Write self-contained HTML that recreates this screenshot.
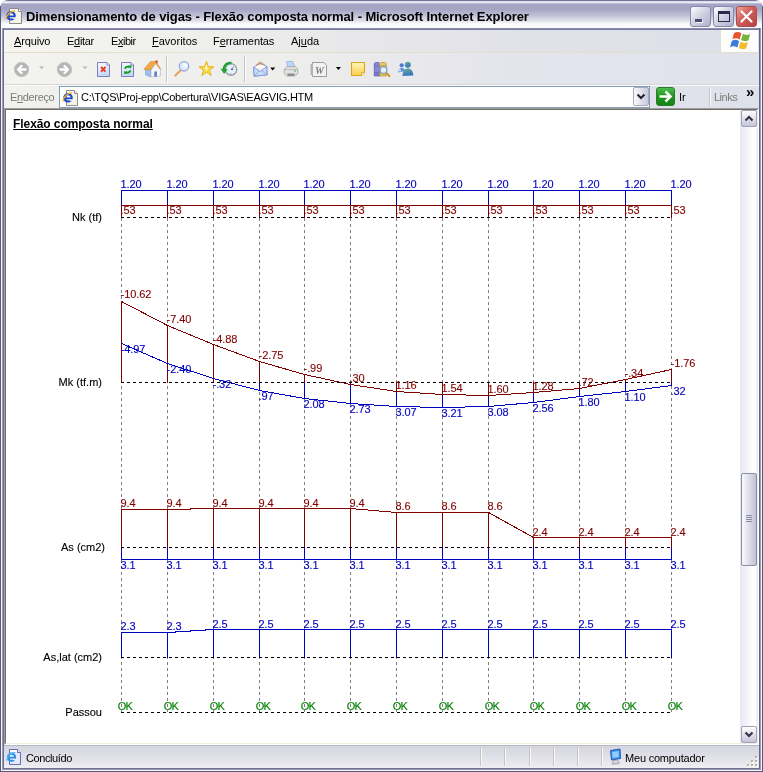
<!DOCTYPE html>
<html><head><meta charset="utf-8"><title>Dimensionamento de vigas - Flexão composta normal</title>
<style>
html,body{margin:0;padding:0}
body{width:763px;height:772px;overflow:hidden;position:relative;background:#fff;font-family:"Liberation Sans",sans-serif;font-size:11px;color:#000}
div,span{position:absolute;box-sizing:border-box;white-space:nowrap}
svg{position:absolute;overflow:visible}
#frame{will-change:transform;left:0;top:0;width:763px;height:772px;background:#c9c9d9;border-radius:8px 8px 0 0;overflow:hidden}
#title{left:0;top:0;width:763px;height:30px;border-radius:8px 8px 0 0;
 background:linear-gradient(#6e6e92 0,#7a7a9c 1px,#dcdcec 1.5px,#ececf6 2.5px,#a6a6c6 4px,#a4a4c4 9px,#bebed4 15px,#e2e2ec 21px,#fcfcfe 24px,#fafafc 27.8px,#9090ae 28.3px,#787a9e 29.5px,#787a9e 30px)}
#ttext{left:26px;top:9px;font-weight:bold;font-size:13px;line-height:16px;color:#000;letter-spacing:-0.1px}
.mb{top:30px;left:4px;width:755px;height:22px;background:linear-gradient(90deg,#f5f4ef 0,#efefed 25%,#e8e8ea 45%,#e1e2e9 70%,#dddfe8 100%)}
.mi{top:34px;font-size:11px;line-height:14px}
.mi u{text-decoration:underline}
#tb{top:53px;left:4px;width:755px;height:32px;background:linear-gradient(90deg,#f3f3ef 0,#ededec 40%,#e3e4ec 70%,#e1e3ec 100%)}
#ab{top:86px;left:4px;width:755px;height:22px;background:linear-gradient(90deg,#f1f1ee 0,#ebebec 40%,#e1e2ea 70%,#dfe1ea 100%)}
#content{left:4px;top:108px;width:755px;height:637px;background:#fff;border:1px solid;border-color:#9d9da1 #fff #fff #9d9da1}
#content2{left:5px;top:109px;width:753px;height:635px;background:#fff;border:1px solid;border-color:#716f64 #f1efe2 #f1efe2 #716f64}
#chart text{font-family:"Liberation Sans",sans-serif;font-size:11px;stroke-width:0.12px}
#sb{left:4px;top:745px;width:755px;height:23px;background:linear-gradient(#b8b8c4 0,#b8b8c4 1px,#d6d6e0 1px,#dfdfe7 11px,#ebebf0 21px,#f0f0f4 23px)}
</style></head>
<body>
<div id="frame">
 <div id="title"></div>
 <!-- frame borders -->
 <div style="left:0;top:6px;width:1px;height:766px;background:#58587a"></div>
 <div style="left:1px;top:28px;width:1px;height:744px;background:#f6f6fa"></div>
 <div style="left:2px;top:28px;width:1px;height:744px;background:#9a9ab6"></div>
 <div style="left:3px;top:28px;width:1px;height:744px;background:#6e6e8e"></div>
 <div style="left:759px;top:28px;width:1px;height:744px;background:#66668a"></div>
 <div style="left:760px;top:28px;width:1px;height:744px;background:#9a9ab6"></div>
 <div style="left:761px;top:28px;width:1px;height:744px;background:#f6f6fa"></div>
 <div style="left:762px;top:6px;width:1px;height:766px;background:#58587a"></div>
 <div style="left:3px;top:768px;width:757px;height:1px;background:#6e6e8e"></div>
 <div style="left:2px;top:769px;width:759px;height:1px;background:#9a9ab6"></div>
 <div style="left:1px;top:770px;width:761px;height:1px;background:#f6f6fa"></div>
 <div style="left:0;top:771px;width:763px;height:1px;background:#58587a"></div>

 <!-- title icon + text -->
 <svg style="left:5px;top:8px" width="17" height="16" viewBox="0 0 17 16">
  <path d="M4.500 .500h9l3 3v12h-12z" fill="#f4f4ea" stroke="#8c8c84"/>
  <path d="M13.500 .500v3h3" fill="#fff" stroke="#8c8c84"/>
  <circle cx="6" cy="7.800" r="3.700" fill="none" stroke="#1a48d0" stroke-width="2.200"/>
  <path d="M2.500 8.300h7" stroke="#1a48d0" stroke-width="1.800"/>
  <rect x="7.500" y="9.300" width="3.500" height="1.600" fill="#f4f4ea"/>
  <path d="M1 11.500C1.500 6 6 2.500 10 3.200" stroke="#f0b020" stroke-width="1.200" fill="none"/>
 </svg>
 <div id="ttext">Dimensionamento de vigas - Flexão composta normal - Microsoft Internet Explorer</div>

 <!-- caption buttons -->
 <div style="left:690px;top:6px;width:21px;height:21px;border-radius:3px;border:1px solid #8888ac;background:linear-gradient(135deg,#ffffff 0,#d4d4e4 45%,#b0b0cc 100%)"></div>
 <div style="left:695px;top:19px;width:7px;height:3px;background:#4c4c78;box-shadow:1px 1px #f4f4fa"></div>
 <div style="left:713px;top:6px;width:21px;height:21px;border-radius:3px;border:1px solid #8888ac;background:linear-gradient(135deg,#ffffff 0,#d4d4e4 45%,#b0b0cc 100%)"></div>
 <div style="left:718px;top:11px;width:12px;height:11px;border:1px solid #2a2a4a;border-top-width:3px"></div>
 <div style="left:736px;top:6px;width:21px;height:21px;border-radius:3px;border:1px solid #a85050;background:linear-gradient(135deg,#eaa49c 0,#d25e5a 45%,#b44040 100%)"></div>
 <svg style="left:736px;top:6px" width="21" height="21"><path d="M5.5 5.5l10 10M15.5 5.5l-10 10" stroke="#fff" stroke-width="2.2" stroke-linecap="round"/></svg>

 <!-- menu bar -->
 <div class="mb"></div>
 <div style="left:4px;top:52px;width:755px;height:1px;background:#e3dfcc"></div>
 <div style="left:720px;top:30px;width:38px;height:22px;background:#fdfdfd;border-left:1px solid #e3dfcc"></div>
 <svg style="left:729.500px;top:31px" width="21.500" height="19" viewBox="0 2 17 15">
  <path d="M3.2 3.5c2-1.2 4-1 5.8.2l-1.4 5c-1.8-1.2-3.8-1.4-5.8-.2z" fill="#e8552c"/>
  <path d="M10.2 4.2c1.8 1.1 3.8 1.3 5.8.2l-1.4 5c-2 1.1-4 .9-5.8-.2z" fill="#74b53a"/>
  <path d="M1.4 9.8c2-1.2 4-1 5.8.2l-1.4 5c-1.8-1.2-3.8-1.4-5.8-.2z" fill="#3c7ed8"/>
  <path d="M8.4 10.5c1.8 1.1 3.8 1.3 5.8.2l-1.4 5c-2 1.1-4 .9-5.8-.2z" fill="#f4bb2c"/>
 </svg>
 <span class="mi" style="left:14px;letter-spacing:-0.15px"><u>A</u>rquivo</span>
 <span class="mi" style="left:67px;letter-spacing:-0.3px">E<u>d</u>itar</span>
 <span class="mi" style="left:111px;letter-spacing:-0.45px">E<u>x</u>ibir</span>
 <span class="mi" style="left:152px"><u>F</u>avoritos</span>
 <span class="mi" style="left:213px;letter-spacing:-0.1px">F<u>e</u>rramentas</span>
 <span class="mi" style="left:291px">Aj<u>u</u>da</span>

 <!-- toolbar -->
 <div id="tb"></div>
 <div style="left:4px;top:85px;width:755px;height:1px;background:#fafaf8"></div>
 <div style="left:4px;top:84px;width:755px;height:1px;background:#d9d9dc"></div>
 <svg id="tbicons" style="left:0;top:53px" width="763" height="32" viewBox="0 53 763 32">
  <defs><linearGradient id="pg" x1="0" y1="0" x2="0.300" y2="1"><stop offset="0" stop-color="#fdfdff"/><stop offset="1" stop-color="#c4d8f6"/></linearGradient><linearGradient id="ng" x1="0" y1="0" x2="0" y2="1"><stop offset="0" stop-color="#fff6b8"/><stop offset="1" stop-color="#fbce4c"/></linearGradient><linearGradient id="mg" x1="0" y1="0" x2="0.400" y2="1"><stop offset="0" stop-color="#62b48c"/><stop offset="1" stop-color="#3c74c4"/></linearGradient></defs>
  <!-- back -->
  <circle cx="21.500" cy="69.500" r="7.200" fill="#b6b6b6" stroke="#c6c6c6"/>
  <path d="M25.500 69.500h-7M21.500 66l-3.500 3.500 3.500 3.500" stroke="#fff" stroke-width="2.300" fill="none" stroke-linecap="round" stroke-linejoin="round"/>
  <path d="M39 66.5h5l-2.5 2.5z" fill="#b4b4b4"/>
  <!-- forward -->
  <circle cx="64.500" cy="69.500" r="7.200" fill="#b6b6b6" stroke="#c6c6c6"/>
  <path d="M60.500 69.500h7M64.500 66l3.500 3.500-3.500 3.500" stroke="#fff" stroke-width="2.300" fill="none" stroke-linecap="round" stroke-linejoin="round"/>
  <path d="M82.5 66.5h5l-2.5 2.5z" fill="#b4b4b4"/>
  <!-- stop -->
  <path d="M97.500 62.500h9.500l2.500 2.500v11.500h-12z" fill="url(#pg)" stroke="#7272b8" stroke-width=".9"/>
  <path d="M107 62.500v2.500h2.500" fill="#fff" stroke="#6c6cb4" stroke-width=".8"/>
  <path d="M101 67l4.500 4.600M105.500 67l-4.500 4.600" stroke="#f03818" stroke-width="1.900"/>
  <!-- refresh -->
  <path d="M121.500 62.500h9.500l2.500 2.500v11.500h-12z" fill="url(#pg)" stroke="#7272b8" stroke-width=".9"/>
  <path d="M131 62.500v2.500h2.500" fill="#fff" stroke="#6c6cb4" stroke-width=".8"/>
  <path d="M125 68.800a2.800 2.600 0 0 1 4.800-1.300M130.400 70.400a2.800 2.600 0 0 1-4.800 1.400" stroke="#12a024" stroke-width="1.900" fill="none"/>
  <path d="M128.300 65.300l3.400 .2-.8 3.300zM127.200 74l-3.400-.2 .8-3.300z" fill="#12a024"/>
  <!-- home -->
  <rect x="155.500" y="60.500" width="2" height="3.500" fill="#c02818"/>
  <path d="M145.500 69l5.500 1v7l-5.500-2z" fill="#9cc0ec" stroke="#7aa0d4" stroke-width=".6"/>
  <path d="M151 70l5-6.500 4.500 6v6.500l-9.500 1z" fill="#f2f5fb" stroke="#a8b4cc" stroke-width=".6"/>
  <path d="M143.800 69.300l6.700-7.800h5.500l-5.300 8.500z" fill="#f2a848" stroke="#d48c30" stroke-width=".6"/>
  <path d="M156 61.500l5 7.300-1 .7-4.500-6z" fill="#e8983c"/>
  <path d="M154.300 71.500h2.700v5l-2.700 .3z" fill="#6c7cc0"/>
  <!-- sep -->
  <path d="M166.500 56v26" stroke="#c2c2c6"/><path d="M167.500 56v26" stroke="#fbfbfb"/>
  <!-- search -->
  <path d="M175.300 75.500l4.900-4.800" stroke="#e8a25c" stroke-width="2.100" stroke-linecap="round"/>
  <circle cx="184" cy="66.300" r="4.700" fill="#dcecfc" stroke="#9aa6e0" stroke-width="1.300"/>
  <circle cx="185" cy="65.300" r="2.200" fill="#f6fbff"/>
  <!-- favorites star -->
  <path d="M206.50 61.30L208.32 66.69L214.01 66.76L209.45 70.16L211.14 75.59L206.50 72.30L201.86 75.59L203.55 70.16L198.99 66.76L204.68 66.69z" fill="#fbdc48" stroke="#e2ae18" stroke-width=".9" stroke-linejoin="round"/>
  <path d="M206.500 64.500l1.300 3.500-1.300 3-1.600-3z" fill="#fff8c8"/>
  <!-- history -->
  <circle cx="231" cy="69.500" r="5.700" fill="#e4f2fb" stroke="#9ca2aa" stroke-width="1.400"/>
  <path d="M231 69.500l2.800-2.600M231 69.500h2.200" stroke="#5a6470" stroke-width="1"/>
  <circle cx="231" cy="74" r=".6" fill="#e05030"/>
  <path d="M231.500 63C226.500 62.300 223.600 65.500 224 70" stroke="#22a032" stroke-width="2.500" fill="none"/>
  <path d="M224.200 74l-3.600-5.200 7 .3z" fill="#22a032"/>
  <!-- sep -->
  <path d="M244.500 56v26" stroke="#c2c2c6"/><path d="M245.500 56v26" stroke="#fbfbfb"/>
  <!-- mail -->
  <path d="M256 65l4-3.300 4.500 2.800z" fill="#f6b060" stroke="#d89040" stroke-width=".5"/>
  <path d="M255.500 66.500l5-2 4.500 1.500v2h-9.500z" fill="#fffdf4"/>
  <path d="M253.700 67.300l6.500-4.300 6.600 3.400 .2 8.400-12.800 1.400z" fill="none" stroke="#8a8cd8" stroke-width=".9"/>
  <path d="M253.700 67.300l6.600 4.200 6.500-5.100 .2 8.400-12.800 1.400z" fill="#bfe2fa" stroke="#8a8cd8" stroke-width=".9"/>
  <path d="M254.200 76l5-5M267 74.800l-5.200-4.300" stroke="#8a8cd8" fill="none" stroke-width=".7"/>
  <path d="M270.200 67.500h5l-2.500 3z" fill="#000"/>
  <!-- print -->
  <path d="M287.500 67l-.8-5.300 6-.4 2 5.700z" fill="#bcd8fa" stroke="#86a8e0" stroke-width=".7"/>
  <path d="M284.300 69l3.200-2.300h7.800l2.500 2.300v4.500l-3 2.500h-8l-2.500-2.500z" fill="#e2e2e2" stroke="#a2a2a2" stroke-width=".8"/>
  <path d="M284.300 69.500h13.500" stroke="#b4b4b4" stroke-width=".8"/>
  <path d="M287 73.500h8l-1 2.500h-6z" fill="#8c8c8c"/>
  <rect x="294" y="70.500" width="2" height="1" fill="#48b048"/>
  <!-- word edit -->
  <path d="M312.500 62.500h11l3 2.500v11.500h-14z" fill="#f2f2f2" stroke="#9c9c9c"/>
  <path d="M310.500 64h2.500v11h-2.500z" fill="#b4b4b4"/>
  <text x="315" y="74" font-family="Liberation Serif,serif" font-style="italic" font-weight="bold" font-size="10" fill="#7a7a7a">W</text>
  <path d="M335.900 67h5l-2.500 3z" fill="#000"/>
  <!-- note -->
  <path d="M351.500 62.500h13v10l-3 3h-10z" fill="url(#ng)" stroke="#d8a818" stroke-width="1.100"/>
  <path d="M364.500 72.500h-3v3" fill="#fffbe0" stroke="#d8a818" stroke-width=".8"/>
  <!-- research -->
  <path d="M374.300 63.500l1-1h3.500l1 1v12.500h-5.500z" fill="#8686dc" stroke="#5454aa" stroke-width=".7"/>
  <path d="M374.300 66h5.500M374.300 72.500h5.500M374.300 74h5.500" stroke="#5c5cb4" stroke-width=".6"/>
  <path d="M379.800 63.500l1-1h4.500l1 1v12.500h-6.500z" fill="#ecc868" stroke="#b89030" stroke-width=".7"/>
  <path d="M379.800 65.500h6.500M379.800 74h6.500" stroke="#c8a040" stroke-width=".6"/>
  <path d="M386 72.500l3.300 3.600" stroke="#d89830" stroke-width="2.200" stroke-linecap="round"/>
  <circle cx="383.500" cy="70" r="3.400" fill="#dff2fc" stroke="#7a9ab8" stroke-width="1.100"/>
  <!-- messenger -->
  <circle cx="401.700" cy="65.300" r="2.100" fill="#4c7cd4"/>
  <path d="M398.300 72.500c0-3 1.500-4.500 3.500-4.500s3 1.200 3 3z" fill="#5a8ce0"/>
  <circle cx="400" cy="70.500" r="1" fill="#f4f8ff"/>
  <circle cx="407.800" cy="64.800" r="3" fill="url(#mg)"/>
  <path d="M402.500 76c0-5 2.300-7.500 5.300-7.500s5.500 2.500 5.500 7z" fill="url(#mg)"/>
 </svg>

 <!-- address bar -->
 <div id="ab"></div>
 <span style="left:10px;top:90px;font-size:11px;line-height:14px;color:#7c7c74;letter-spacing:-0.35px">E<u>n</u>dereço</span>
 <div style="left:59px;top:86px;width:591px;height:22px;background:#fff;border:1px solid #7f9db9"></div>
 <svg style="left:62px;top:90px" width="17" height="16" viewBox="0 0 17 16">
  <path d="M4.500 .500h8l3 3v12h-11z" fill="#f4f4ea" stroke="#8c8c84"/>
  <path d="M12.500 .500v3h3" fill="#fff" stroke="#8c8c84"/>
  <circle cx="6" cy="7.800" r="3.700" fill="none" stroke="#1a48d0" stroke-width="2.200"/>
  <path d="M2.500 8.300h7" stroke="#1a48d0" stroke-width="1.800"/>
  <rect x="7.500" y="9.300" width="3.500" height="1.600" fill="#f4f4ea"/>
  <path d="M1 11.500C1.500 6 6 2.500 10 3.200" stroke="#f0b020" stroke-width="1.200" fill="none"/>
 </svg>
 <span id="addr" style="left:81px;top:90px;font-size:11px;line-height:14px;letter-spacing:-0.24px">C:\TQS\Proj-epp\Cobertura\VIGAS\EAGVIG.HTM</span>
 <div style="left:633px;top:87px;width:16px;height:19px;border:1px solid #a8a8c0;border-radius:2px;background:linear-gradient(90deg,#fafafc,#c8c8dc)"></div>
 <svg style="left:633px;top:87px" width="16" height="19"><path d="M4.500 7.500l3.500 3.500 3.500-3.500" stroke="#202030" stroke-width="2" fill="none"/></svg>
 <div style="left:656px;top:87px;width:19px;height:19px;border-radius:3px;border:1px solid #2a7a2a;background:linear-gradient(#4cbc4c,#1c961c 50%,#148414)"></div>
 <svg style="left:656px;top:87px" width="19" height="19"><path d="M3.500 9.500h10.500M9.500 4.500l5 5-5 5" stroke="#fff" stroke-width="2.500" fill="none"/></svg>
 <span style="left:679px;top:90px;font-size:11px;line-height:14px">Ir</span>
 <div style="left:709px;top:88px;width:1px;height:18px;background:#c4c4cc"></div>
 <div style="left:710px;top:88px;width:1px;height:18px;background:#fbfbfb"></div>
 <span style="left:714px;top:90px;font-size:11px;line-height:14px;color:#7c7c74;letter-spacing:-0.5px">Links</span>
 <span style="left:746px;top:85px;font-size:15px;line-height:14px;font-weight:bold">»</span>

 <!-- content -->
 <div id="content"></div><div id="content2"></div>
 <span id="h" style="left:13px;top:117px;font-size:12px;line-height:15px;letter-spacing:-0.07px;font-weight:bold;text-decoration:underline">Flexão composta normal</span>
 <svg id="chart" style="left:0;top:0" width="763" height="772" viewBox="0 0 763 772">
<line x1="121.5" y1="218" x2="121.5" y2="712" stroke="#808080" stroke-dasharray="3 3" shape-rendering="crispEdges"/>
<line x1="167.5" y1="218" x2="167.5" y2="712" stroke="#808080" stroke-dasharray="3 3" shape-rendering="crispEdges"/>
<line x1="213.5" y1="218" x2="213.5" y2="712" stroke="#808080" stroke-dasharray="3 3" shape-rendering="crispEdges"/>
<line x1="259.5" y1="218" x2="259.5" y2="712" stroke="#808080" stroke-dasharray="3 3" shape-rendering="crispEdges"/>
<line x1="304.5" y1="218" x2="304.5" y2="712" stroke="#808080" stroke-dasharray="3 3" shape-rendering="crispEdges"/>
<line x1="350.5" y1="218" x2="350.5" y2="712" stroke="#808080" stroke-dasharray="3 3" shape-rendering="crispEdges"/>
<line x1="396.5" y1="218" x2="396.5" y2="712" stroke="#808080" stroke-dasharray="3 3" shape-rendering="crispEdges"/>
<line x1="442.5" y1="218" x2="442.5" y2="712" stroke="#808080" stroke-dasharray="3 3" shape-rendering="crispEdges"/>
<line x1="488.5" y1="218" x2="488.5" y2="712" stroke="#808080" stroke-dasharray="3 3" shape-rendering="crispEdges"/>
<line x1="533.5" y1="218" x2="533.5" y2="712" stroke="#808080" stroke-dasharray="3 3" shape-rendering="crispEdges"/>
<line x1="579.5" y1="218" x2="579.5" y2="712" stroke="#808080" stroke-dasharray="3 3" shape-rendering="crispEdges"/>
<line x1="625.5" y1="218" x2="625.5" y2="712" stroke="#808080" stroke-dasharray="3 3" shape-rendering="crispEdges"/>
<line x1="671.5" y1="218" x2="671.5" y2="712" stroke="#808080" stroke-dasharray="3 3" shape-rendering="crispEdges"/>
<text x="120.6" y="188" fill="#0000c0" stroke="#0000c0" letter-spacing="-0.1">1.20</text>
<line x1="121.5" y1="190" x2="121.5" y2="206" stroke="#0000c0" shape-rendering="crispEdges"/>
<line x1="121.5" y1="205" x2="121.5" y2="218" stroke="#800000" shape-rendering="crispEdges"/>
<text x="120.6" y="214" fill="#800000" stroke="#800000" letter-spacing="-0.1">.53</text>
<text x="166.6" y="188" fill="#0000c0" stroke="#0000c0" letter-spacing="-0.1">1.20</text>
<line x1="167.5" y1="190" x2="167.5" y2="206" stroke="#0000c0" shape-rendering="crispEdges"/>
<line x1="167.5" y1="205" x2="167.5" y2="218" stroke="#800000" shape-rendering="crispEdges"/>
<text x="166.6" y="214" fill="#800000" stroke="#800000" letter-spacing="-0.1">.53</text>
<text x="212.6" y="188" fill="#0000c0" stroke="#0000c0" letter-spacing="-0.1">1.20</text>
<line x1="213.5" y1="190" x2="213.5" y2="206" stroke="#0000c0" shape-rendering="crispEdges"/>
<line x1="213.5" y1="205" x2="213.5" y2="218" stroke="#800000" shape-rendering="crispEdges"/>
<text x="212.6" y="214" fill="#800000" stroke="#800000" letter-spacing="-0.1">.53</text>
<text x="258.6" y="188" fill="#0000c0" stroke="#0000c0" letter-spacing="-0.1">1.20</text>
<line x1="259.5" y1="190" x2="259.5" y2="206" stroke="#0000c0" shape-rendering="crispEdges"/>
<line x1="259.5" y1="205" x2="259.5" y2="218" stroke="#800000" shape-rendering="crispEdges"/>
<text x="258.6" y="214" fill="#800000" stroke="#800000" letter-spacing="-0.1">.53</text>
<text x="303.6" y="188" fill="#0000c0" stroke="#0000c0" letter-spacing="-0.1">1.20</text>
<line x1="304.5" y1="190" x2="304.5" y2="206" stroke="#0000c0" shape-rendering="crispEdges"/>
<line x1="304.5" y1="205" x2="304.5" y2="218" stroke="#800000" shape-rendering="crispEdges"/>
<text x="303.6" y="214" fill="#800000" stroke="#800000" letter-spacing="-0.1">.53</text>
<text x="349.6" y="188" fill="#0000c0" stroke="#0000c0" letter-spacing="-0.1">1.20</text>
<line x1="350.5" y1="190" x2="350.5" y2="206" stroke="#0000c0" shape-rendering="crispEdges"/>
<line x1="350.5" y1="205" x2="350.5" y2="218" stroke="#800000" shape-rendering="crispEdges"/>
<text x="349.6" y="214" fill="#800000" stroke="#800000" letter-spacing="-0.1">.53</text>
<text x="395.6" y="188" fill="#0000c0" stroke="#0000c0" letter-spacing="-0.1">1.20</text>
<line x1="396.5" y1="190" x2="396.5" y2="206" stroke="#0000c0" shape-rendering="crispEdges"/>
<line x1="396.5" y1="205" x2="396.5" y2="218" stroke="#800000" shape-rendering="crispEdges"/>
<text x="395.6" y="214" fill="#800000" stroke="#800000" letter-spacing="-0.1">.53</text>
<text x="441.6" y="188" fill="#0000c0" stroke="#0000c0" letter-spacing="-0.1">1.20</text>
<line x1="442.5" y1="190" x2="442.5" y2="206" stroke="#0000c0" shape-rendering="crispEdges"/>
<line x1="442.5" y1="205" x2="442.5" y2="218" stroke="#800000" shape-rendering="crispEdges"/>
<text x="441.6" y="214" fill="#800000" stroke="#800000" letter-spacing="-0.1">.53</text>
<text x="487.6" y="188" fill="#0000c0" stroke="#0000c0" letter-spacing="-0.1">1.20</text>
<line x1="488.5" y1="190" x2="488.5" y2="206" stroke="#0000c0" shape-rendering="crispEdges"/>
<line x1="488.5" y1="205" x2="488.5" y2="218" stroke="#800000" shape-rendering="crispEdges"/>
<text x="487.6" y="214" fill="#800000" stroke="#800000" letter-spacing="-0.1">.53</text>
<text x="532.6" y="188" fill="#0000c0" stroke="#0000c0" letter-spacing="-0.1">1.20</text>
<line x1="533.5" y1="190" x2="533.5" y2="206" stroke="#0000c0" shape-rendering="crispEdges"/>
<line x1="533.5" y1="205" x2="533.5" y2="218" stroke="#800000" shape-rendering="crispEdges"/>
<text x="532.6" y="214" fill="#800000" stroke="#800000" letter-spacing="-0.1">.53</text>
<text x="578.6" y="188" fill="#0000c0" stroke="#0000c0" letter-spacing="-0.1">1.20</text>
<line x1="579.5" y1="190" x2="579.5" y2="206" stroke="#0000c0" shape-rendering="crispEdges"/>
<line x1="579.5" y1="205" x2="579.5" y2="218" stroke="#800000" shape-rendering="crispEdges"/>
<text x="578.6" y="214" fill="#800000" stroke="#800000" letter-spacing="-0.1">.53</text>
<text x="624.6" y="188" fill="#0000c0" stroke="#0000c0" letter-spacing="-0.1">1.20</text>
<line x1="625.5" y1="190" x2="625.5" y2="206" stroke="#0000c0" shape-rendering="crispEdges"/>
<line x1="625.5" y1="205" x2="625.5" y2="218" stroke="#800000" shape-rendering="crispEdges"/>
<text x="624.6" y="214" fill="#800000" stroke="#800000" letter-spacing="-0.1">.53</text>
<text x="670.6" y="188" fill="#0000c0" stroke="#0000c0" letter-spacing="-0.1">1.20</text>
<line x1="671.5" y1="190" x2="671.5" y2="206" stroke="#0000c0" shape-rendering="crispEdges"/>
<line x1="671.5" y1="205" x2="671.5" y2="218" stroke="#800000" shape-rendering="crispEdges"/>
<text x="670.6" y="214" fill="#800000" stroke="#800000" letter-spacing="-0.1">.53</text>
<line x1="121" y1="190.5" x2="672" y2="190.5" stroke="#0000c0" shape-rendering="crispEdges"/>
<line x1="121" y1="205.5" x2="672" y2="205.5" stroke="#800000" shape-rendering="crispEdges"/>
<line x1="121" y1="217.5" x2="672" y2="217.5" stroke="#000" stroke-dasharray="3 3" shape-rendering="crispEdges"/>
<text x="102" y="221" fill="#000" stroke="#000" text-anchor="end">Nk (tf)</text>
<line x1="121.5" y1="343" x2="121.5" y2="383" stroke="#0000c0" shape-rendering="crispEdges"/>
<line x1="121.5" y1="301" x2="121.5" y2="383" stroke="#800000" shape-rendering="crispEdges"/>
<line x1="167.5" y1="363" x2="167.5" y2="383" stroke="#0000c0" shape-rendering="crispEdges"/>
<line x1="167.5" y1="325" x2="167.5" y2="383" stroke="#800000" shape-rendering="crispEdges"/>
<line x1="213.5" y1="378" x2="213.5" y2="383" stroke="#0000c0" shape-rendering="crispEdges"/>
<line x1="213.5" y1="344" x2="213.5" y2="383" stroke="#800000" shape-rendering="crispEdges"/>
<line x1="259.5" y1="382" x2="259.5" y2="391" stroke="#0000c0" shape-rendering="crispEdges"/>
<line x1="259.5" y1="361" x2="259.5" y2="383" stroke="#800000" shape-rendering="crispEdges"/>
<line x1="304.5" y1="382" x2="304.5" y2="399" stroke="#0000c0" shape-rendering="crispEdges"/>
<line x1="304.5" y1="374" x2="304.5" y2="383" stroke="#800000" shape-rendering="crispEdges"/>
<line x1="350.5" y1="382" x2="350.5" y2="404" stroke="#0000c0" shape-rendering="crispEdges"/>
<line x1="350.5" y1="382" x2="350.5" y2="385" stroke="#800000" shape-rendering="crispEdges"/>
<line x1="396.5" y1="382" x2="396.5" y2="407" stroke="#0000c0" shape-rendering="crispEdges"/>
<line x1="396.5" y1="382" x2="396.5" y2="392" stroke="#800000" shape-rendering="crispEdges"/>
<line x1="442.5" y1="382" x2="442.5" y2="408" stroke="#0000c0" shape-rendering="crispEdges"/>
<line x1="442.5" y1="382" x2="442.5" y2="395" stroke="#800000" shape-rendering="crispEdges"/>
<line x1="488.5" y1="382" x2="488.5" y2="407" stroke="#0000c0" shape-rendering="crispEdges"/>
<line x1="488.5" y1="382" x2="488.5" y2="396" stroke="#800000" shape-rendering="crispEdges"/>
<line x1="533.5" y1="382" x2="533.5" y2="403" stroke="#0000c0" shape-rendering="crispEdges"/>
<line x1="533.5" y1="382" x2="533.5" y2="393" stroke="#800000" shape-rendering="crispEdges"/>
<line x1="579.5" y1="382" x2="579.5" y2="397" stroke="#0000c0" shape-rendering="crispEdges"/>
<line x1="579.5" y1="382" x2="579.5" y2="389" stroke="#800000" shape-rendering="crispEdges"/>
<line x1="625.5" y1="382" x2="625.5" y2="392" stroke="#0000c0" shape-rendering="crispEdges"/>
<line x1="625.5" y1="379" x2="625.5" y2="383" stroke="#800000" shape-rendering="crispEdges"/>
<line x1="671.5" y1="382" x2="671.5" y2="386" stroke="#0000c0" shape-rendering="crispEdges"/>
<line x1="671.5" y1="369" x2="671.5" y2="383" stroke="#800000" shape-rendering="crispEdges"/>
<polyline points="121.5,343.5 167.5,363.5 213.5,378.5 259.5,390.5 304.5,398.5 350.5,403.5 396.5,406.5 442.5,407.5 488.5,406.5 533.5,402.5 579.5,396.5 625.5,391.5 671.5,385.5" fill="none" stroke="#0000c0" stroke-width="1" shape-rendering="crispEdges"/>
<polyline points="121.5,301.5 167.5,325.5 213.5,344.5 259.5,361.5 304.5,374.5 350.5,384.5 396.5,391.5 442.5,394.5 488.5,395.5 533.5,392.5 579.5,388.5 625.5,379.5 671.5,369.5" fill="none" stroke="#800000" stroke-width="1" shape-rendering="crispEdges"/>
<line x1="121" y1="382.5" x2="672" y2="382.5" stroke="#000" stroke-dasharray="3 3" shape-rendering="crispEdges"/>
<text x="120.6" y="298" fill="#800000" stroke="#800000" letter-spacing="-0.1">-10.62</text>
<text x="120.6" y="353" fill="#0000c0" stroke="#0000c0" letter-spacing="-0.1">-4.97</text>
<text x="166.6" y="323" fill="#800000" stroke="#800000" letter-spacing="-0.1">-7.40</text>
<text x="166.6" y="373" fill="#0000c0" stroke="#0000c0" letter-spacing="-0.1">-2.40</text>
<text x="212.6" y="343" fill="#800000" stroke="#800000" letter-spacing="-0.1">-4.88</text>
<text x="212.6" y="388" fill="#0000c0" stroke="#0000c0" letter-spacing="-0.1">-.32</text>
<text x="258.6" y="359" fill="#800000" stroke="#800000" letter-spacing="-0.1">-2.75</text>
<text x="258.6" y="400" fill="#0000c0" stroke="#0000c0" letter-spacing="-0.1">.97</text>
<text x="303.6" y="372" fill="#800000" stroke="#800000" letter-spacing="-0.1">-.99</text>
<text x="303.6" y="408" fill="#0000c0" stroke="#0000c0" letter-spacing="-0.1">2.08</text>
<text x="349.6" y="382" fill="#800000" stroke="#800000" letter-spacing="-0.1">.30</text>
<text x="349.6" y="413" fill="#0000c0" stroke="#0000c0" letter-spacing="-0.1">2.73</text>
<text x="395.6" y="389" fill="#800000" stroke="#800000" letter-spacing="-0.1">1.16</text>
<text x="395.6" y="416" fill="#0000c0" stroke="#0000c0" letter-spacing="-0.1">3.07</text>
<text x="441.6" y="392" fill="#800000" stroke="#800000" letter-spacing="-0.1">1.54</text>
<text x="441.6" y="417" fill="#0000c0" stroke="#0000c0" letter-spacing="-0.1">3.21</text>
<text x="487.6" y="393" fill="#800000" stroke="#800000" letter-spacing="-0.1">1.60</text>
<text x="487.6" y="416" fill="#0000c0" stroke="#0000c0" letter-spacing="-0.1">3.08</text>
<text x="532.6" y="390" fill="#800000" stroke="#800000" letter-spacing="-0.1">1.28</text>
<text x="532.6" y="412" fill="#0000c0" stroke="#0000c0" letter-spacing="-0.1">2.56</text>
<text x="578.6" y="386" fill="#800000" stroke="#800000" letter-spacing="-0.1">.72</text>
<text x="578.6" y="406" fill="#0000c0" stroke="#0000c0" letter-spacing="-0.1">1.80</text>
<text x="624.6" y="377" fill="#800000" stroke="#800000" letter-spacing="-0.1">-.34</text>
<text x="624.6" y="401" fill="#0000c0" stroke="#0000c0" letter-spacing="-0.1">1.10</text>
<text x="670.6" y="367" fill="#800000" stroke="#800000" letter-spacing="-0.1">-1.76</text>
<text x="670.6" y="395" fill="#0000c0" stroke="#0000c0" letter-spacing="-0.1">.32</text>
<text x="102" y="386" fill="#000" stroke="#000" text-anchor="end">Mk (tf.m)</text>
<line x1="121.5" y1="509" x2="121.5" y2="548" stroke="#800000" shape-rendering="crispEdges"/>
<line x1="121.5" y1="547" x2="121.5" y2="560" stroke="#0000c0" shape-rendering="crispEdges"/>
<text x="120.6" y="507" fill="#800000" stroke="#800000" letter-spacing="-0.1">9.4</text>
<text x="120.6" y="569" fill="#0000c0" stroke="#0000c0" letter-spacing="-0.1">3.1</text>
<line x1="167.5" y1="509" x2="167.5" y2="548" stroke="#800000" shape-rendering="crispEdges"/>
<line x1="167.5" y1="547" x2="167.5" y2="560" stroke="#0000c0" shape-rendering="crispEdges"/>
<text x="166.6" y="507" fill="#800000" stroke="#800000" letter-spacing="-0.1">9.4</text>
<text x="166.6" y="569" fill="#0000c0" stroke="#0000c0" letter-spacing="-0.1">3.1</text>
<line x1="213.5" y1="508" x2="213.5" y2="548" stroke="#800000" shape-rendering="crispEdges"/>
<line x1="213.5" y1="547" x2="213.5" y2="560" stroke="#0000c0" shape-rendering="crispEdges"/>
<text x="212.6" y="507" fill="#800000" stroke="#800000" letter-spacing="-0.1">9.4</text>
<text x="212.6" y="569" fill="#0000c0" stroke="#0000c0" letter-spacing="-0.1">3.1</text>
<line x1="259.5" y1="508" x2="259.5" y2="548" stroke="#800000" shape-rendering="crispEdges"/>
<line x1="259.5" y1="547" x2="259.5" y2="560" stroke="#0000c0" shape-rendering="crispEdges"/>
<text x="258.6" y="507" fill="#800000" stroke="#800000" letter-spacing="-0.1">9.4</text>
<text x="258.6" y="569" fill="#0000c0" stroke="#0000c0" letter-spacing="-0.1">3.1</text>
<line x1="304.5" y1="508" x2="304.5" y2="548" stroke="#800000" shape-rendering="crispEdges"/>
<line x1="304.5" y1="547" x2="304.5" y2="560" stroke="#0000c0" shape-rendering="crispEdges"/>
<text x="303.6" y="507" fill="#800000" stroke="#800000" letter-spacing="-0.1">9.4</text>
<text x="303.6" y="569" fill="#0000c0" stroke="#0000c0" letter-spacing="-0.1">3.1</text>
<line x1="350.5" y1="508" x2="350.5" y2="548" stroke="#800000" shape-rendering="crispEdges"/>
<line x1="350.5" y1="547" x2="350.5" y2="560" stroke="#0000c0" shape-rendering="crispEdges"/>
<text x="349.6" y="507" fill="#800000" stroke="#800000" letter-spacing="-0.1">9.4</text>
<text x="349.6" y="569" fill="#0000c0" stroke="#0000c0" letter-spacing="-0.1">3.1</text>
<line x1="396.5" y1="512" x2="396.5" y2="548" stroke="#800000" shape-rendering="crispEdges"/>
<line x1="396.5" y1="547" x2="396.5" y2="560" stroke="#0000c0" shape-rendering="crispEdges"/>
<text x="395.6" y="510" fill="#800000" stroke="#800000" letter-spacing="-0.1">8.6</text>
<text x="395.6" y="569" fill="#0000c0" stroke="#0000c0" letter-spacing="-0.1">3.1</text>
<line x1="442.5" y1="512" x2="442.5" y2="548" stroke="#800000" shape-rendering="crispEdges"/>
<line x1="442.5" y1="547" x2="442.5" y2="560" stroke="#0000c0" shape-rendering="crispEdges"/>
<text x="441.6" y="510" fill="#800000" stroke="#800000" letter-spacing="-0.1">8.6</text>
<text x="441.6" y="569" fill="#0000c0" stroke="#0000c0" letter-spacing="-0.1">3.1</text>
<line x1="488.5" y1="512" x2="488.5" y2="548" stroke="#800000" shape-rendering="crispEdges"/>
<line x1="488.5" y1="547" x2="488.5" y2="560" stroke="#0000c0" shape-rendering="crispEdges"/>
<text x="487.6" y="510" fill="#800000" stroke="#800000" letter-spacing="-0.1">8.6</text>
<text x="487.6" y="569" fill="#0000c0" stroke="#0000c0" letter-spacing="-0.1">3.1</text>
<line x1="533.5" y1="537" x2="533.5" y2="548" stroke="#800000" shape-rendering="crispEdges"/>
<line x1="533.5" y1="547" x2="533.5" y2="560" stroke="#0000c0" shape-rendering="crispEdges"/>
<text x="532.6" y="536" fill="#800000" stroke="#800000" letter-spacing="-0.1">2.4</text>
<text x="532.6" y="569" fill="#0000c0" stroke="#0000c0" letter-spacing="-0.1">3.1</text>
<line x1="579.5" y1="537" x2="579.5" y2="548" stroke="#800000" shape-rendering="crispEdges"/>
<line x1="579.5" y1="547" x2="579.5" y2="560" stroke="#0000c0" shape-rendering="crispEdges"/>
<text x="578.6" y="536" fill="#800000" stroke="#800000" letter-spacing="-0.1">2.4</text>
<text x="578.6" y="569" fill="#0000c0" stroke="#0000c0" letter-spacing="-0.1">3.1</text>
<line x1="625.5" y1="537" x2="625.5" y2="548" stroke="#800000" shape-rendering="crispEdges"/>
<line x1="625.5" y1="547" x2="625.5" y2="560" stroke="#0000c0" shape-rendering="crispEdges"/>
<text x="624.6" y="536" fill="#800000" stroke="#800000" letter-spacing="-0.1">2.4</text>
<text x="624.6" y="569" fill="#0000c0" stroke="#0000c0" letter-spacing="-0.1">3.1</text>
<line x1="671.5" y1="537" x2="671.5" y2="548" stroke="#800000" shape-rendering="crispEdges"/>
<line x1="671.5" y1="547" x2="671.5" y2="560" stroke="#0000c0" shape-rendering="crispEdges"/>
<text x="670.6" y="536" fill="#800000" stroke="#800000" letter-spacing="-0.1">2.4</text>
<text x="670.6" y="569" fill="#0000c0" stroke="#0000c0" letter-spacing="-0.1">3.1</text>
<polyline points="121.5,509.5 190.5,509.5 190.5,508.5 350.5,508.5 396.5,512.5 488.5,512.5 533.5,537.5 671.5,537.5" fill="none" stroke="#800000" stroke-width="1" shape-rendering="crispEdges"/>
<line x1="121" y1="559.5" x2="672" y2="559.5" stroke="#0000c0" shape-rendering="crispEdges"/>
<line x1="121" y1="547.5" x2="672" y2="547.5" stroke="#000" stroke-dasharray="3 3" shape-rendering="crispEdges"/>
<text x="105" y="551" fill="#000" stroke="#000" text-anchor="end">As (cm2)</text>
<line x1="121.5" y1="632" x2="121.5" y2="658" stroke="#0000c0" shape-rendering="crispEdges"/>
<text x="120.6" y="630" fill="#0000c0" stroke="#0000c0" letter-spacing="-0.1">2.3</text>
<line x1="167.5" y1="632" x2="167.5" y2="658" stroke="#0000c0" shape-rendering="crispEdges"/>
<text x="166.6" y="630" fill="#0000c0" stroke="#0000c0" letter-spacing="-0.1">2.3</text>
<line x1="213.5" y1="629" x2="213.5" y2="658" stroke="#0000c0" shape-rendering="crispEdges"/>
<text x="212.6" y="628" fill="#0000c0" stroke="#0000c0" letter-spacing="-0.1">2.5</text>
<line x1="259.5" y1="629" x2="259.5" y2="658" stroke="#0000c0" shape-rendering="crispEdges"/>
<text x="258.6" y="628" fill="#0000c0" stroke="#0000c0" letter-spacing="-0.1">2.5</text>
<line x1="304.5" y1="629" x2="304.5" y2="658" stroke="#0000c0" shape-rendering="crispEdges"/>
<text x="303.6" y="628" fill="#0000c0" stroke="#0000c0" letter-spacing="-0.1">2.5</text>
<line x1="350.5" y1="629" x2="350.5" y2="658" stroke="#0000c0" shape-rendering="crispEdges"/>
<text x="349.6" y="628" fill="#0000c0" stroke="#0000c0" letter-spacing="-0.1">2.5</text>
<line x1="396.5" y1="629" x2="396.5" y2="658" stroke="#0000c0" shape-rendering="crispEdges"/>
<text x="395.6" y="628" fill="#0000c0" stroke="#0000c0" letter-spacing="-0.1">2.5</text>
<line x1="442.5" y1="629" x2="442.5" y2="658" stroke="#0000c0" shape-rendering="crispEdges"/>
<text x="441.6" y="628" fill="#0000c0" stroke="#0000c0" letter-spacing="-0.1">2.5</text>
<line x1="488.5" y1="629" x2="488.5" y2="658" stroke="#0000c0" shape-rendering="crispEdges"/>
<text x="487.6" y="628" fill="#0000c0" stroke="#0000c0" letter-spacing="-0.1">2.5</text>
<line x1="533.5" y1="629" x2="533.5" y2="658" stroke="#0000c0" shape-rendering="crispEdges"/>
<text x="532.6" y="628" fill="#0000c0" stroke="#0000c0" letter-spacing="-0.1">2.5</text>
<line x1="579.5" y1="629" x2="579.5" y2="658" stroke="#0000c0" shape-rendering="crispEdges"/>
<text x="578.6" y="628" fill="#0000c0" stroke="#0000c0" letter-spacing="-0.1">2.5</text>
<line x1="625.5" y1="629" x2="625.5" y2="658" stroke="#0000c0" shape-rendering="crispEdges"/>
<text x="624.6" y="628" fill="#0000c0" stroke="#0000c0" letter-spacing="-0.1">2.5</text>
<line x1="671.5" y1="629" x2="671.5" y2="658" stroke="#0000c0" shape-rendering="crispEdges"/>
<text x="670.6" y="628" fill="#0000c0" stroke="#0000c0" letter-spacing="-0.1">2.5</text>
<polyline points="121.5,632.5 175.5,632.5 175.5,631.5 190.5,631.5 190.5,630.5 205.5,630.5 205.5,629.5 671.5,629.5" fill="none" stroke="#0000c0" stroke-width="1" shape-rendering="crispEdges"/>
<line x1="121" y1="657.5" x2="672" y2="657.5" stroke="#000" stroke-dasharray="3 3" shape-rendering="crispEdges"/>
<text x="102" y="661" fill="#000" stroke="#000" text-anchor="end">As,lat (cm2)</text>
<text x="117.8" y="710" fill="#008000" stroke="#008000" letter-spacing="-0.9">OK</text>
<text x="163.79999999999998" y="710" fill="#008000" stroke="#008000" letter-spacing="-0.9">OK</text>
<text x="209.79999999999998" y="710" fill="#008000" stroke="#008000" letter-spacing="-0.9">OK</text>
<text x="255.79999999999998" y="710" fill="#008000" stroke="#008000" letter-spacing="-0.9">OK</text>
<text x="300.8" y="710" fill="#008000" stroke="#008000" letter-spacing="-0.9">OK</text>
<text x="346.8" y="710" fill="#008000" stroke="#008000" letter-spacing="-0.9">OK</text>
<text x="392.8" y="710" fill="#008000" stroke="#008000" letter-spacing="-0.9">OK</text>
<text x="438.8" y="710" fill="#008000" stroke="#008000" letter-spacing="-0.9">OK</text>
<text x="484.8" y="710" fill="#008000" stroke="#008000" letter-spacing="-0.9">OK</text>
<text x="529.8000000000001" y="710" fill="#008000" stroke="#008000" letter-spacing="-0.9">OK</text>
<text x="575.8000000000001" y="710" fill="#008000" stroke="#008000" letter-spacing="-0.9">OK</text>
<text x="621.8000000000001" y="710" fill="#008000" stroke="#008000" letter-spacing="-0.9">OK</text>
<text x="667.8000000000001" y="710" fill="#008000" stroke="#008000" letter-spacing="-0.9">OK</text>
<line x1="121" y1="712.5" x2="672" y2="712.5" stroke="#000" stroke-dasharray="3 3" shape-rendering="crispEdges"/>
<text x="102" y="716" fill="#000" stroke="#000" text-anchor="end">Passou</text>
 </svg>

 <!-- scrollbar -->
 <div style="left:740px;top:110px;width:17px;height:633px;background:linear-gradient(90deg,#e6e8f2 0,#f5f5fa 50%,#fefefe 75%,#fff 92%,#e8e8f4 100%)"></div>
 <div style="left:741px;top:110px;width:16px;height:17px;border:1px solid #a0a0b8;border-radius:2px;background:linear-gradient(#fdfdfe,#c4c4d8)"></div>
 <svg style="left:741px;top:110px" width="16" height="17"><path d="M4.500 10.500l3.500-3.500 3.500 3.500" stroke="#303040" stroke-width="2" fill="none"/></svg>
 <div style="left:741px;top:726px;width:16px;height:17px;border:1px solid #a0a0b8;border-radius:2px;background:linear-gradient(#fdfdfe,#c4c4d8)"></div>
 <svg style="left:741px;top:726px" width="16" height="17"><path d="M4.500 6.500l3.500 3.500 3.500-3.500" stroke="#303040" stroke-width="2" fill="none"/></svg>
 <div style="left:741px;top:473px;width:16px;height:93px;border:1px solid #8c8ca8;border-radius:2px;background:linear-gradient(90deg,#fbfbfd,#c0c0d6)"></div>
 <div style="left:746px;top:515px;width:6px;height:1px;background:#8c8ca8;box-shadow:0 2px #8c8ca8,0 4px #8c8ca8,0 6px #8c8ca8"></div>

 <!-- status bar -->
  <div id="sb"></div>
 <svg style="left:5px;top:749px" width="17" height="16" viewBox="0 0 17 16">
  <path d="M4.500 .500h8l3 3v12h-11z" fill="#e4e8fa" stroke="#6a6aae"/>
  <path d="M12.500 .500v3h3" fill="#fff" stroke="#6a6aae"/>
  <rect x="5" y="1" width="7" height="2" fill="#fff"/>
  <circle cx="6.500" cy="8.200" r="3.600" fill="none" stroke="#2a90e8" stroke-width="2.100"/>
  <path d="M3 8.700h7" stroke="#2a90e8" stroke-width="1.700"/>
  <rect x="8" y="9.700" width="3.500" height="1.500" fill="#e4e8fa"/>
  <path d="M1.500 12C2 6.500 6.500 3 10.500 3.700" stroke="#58b8f8" stroke-width="1.100" fill="none"/>
 </svg>
 <span style="left:26px;top:751px;font-size:11px;line-height:14px;letter-spacing:-0.4px">Concluído</span>
 <div style="left:480px;top:748px;width:1px;height:18px;background:#c2c2ca"></div><div style="left:481px;top:748px;width:1px;height:18px;background:#fbf9f0"></div>
 <div style="left:504px;top:748px;width:1px;height:18px;background:#c2c2ca"></div><div style="left:505px;top:748px;width:1px;height:18px;background:#fbf9f0"></div>
 <div style="left:529px;top:748px;width:1px;height:18px;background:#c2c2ca"></div><div style="left:530px;top:748px;width:1px;height:18px;background:#fbf9f0"></div>
 <div style="left:553px;top:748px;width:1px;height:18px;background:#c2c2ca"></div><div style="left:554px;top:748px;width:1px;height:18px;background:#fbf9f0"></div>
 <div style="left:577px;top:748px;width:1px;height:18px;background:#c2c2ca"></div><div style="left:578px;top:748px;width:1px;height:18px;background:#fbf9f0"></div>
 <div style="left:601px;top:748px;width:1px;height:18px;background:#c2c2ca"></div><div style="left:602px;top:748px;width:1px;height:18px;background:#fbf9f0"></div>
 <svg style="left:608px;top:748px" width="14" height="18" viewBox="0 0 14 18">
  <path d="M2.500 2.500l9.500-1.500 .5 9.500-9 1.500z" fill="#3a8cf0" stroke="#2858b8" stroke-width="1"/>
  <path d="M4 4l6.500-1 .3 6-6.200 1z" fill="#8cd0ff"/>
  <path d="M5 12.500l4.500-.8 1.500 3.300-6.500 1z" fill="#d8d8e4" stroke="#8a8aa0" stroke-width=".7"/>
  <path d="M3.500 15.500l8-1 .5 1.500-8 1z" fill="#b8b8c8"/>
 </svg>
 <span style="left:625px;top:751px;font-size:11px;line-height:14px;letter-spacing:-0.2px">Meu computador</span>
 <svg style="left:746px;top:755px" width="13" height="13"><g fill="#fff"><rect x="10" y="2" width="2" height="2"/><rect x="6" y="6" width="2" height="2"/><rect x="10" y="6" width="2" height="2"/><rect x="2" y="10" width="2" height="2"/><rect x="6" y="10" width="2" height="2"/><rect x="10" y="10" width="2" height="2"/></g><g fill="#b8b298"><rect x="9" y="1" width="2" height="2"/><rect x="5" y="5" width="2" height="2"/><rect x="9" y="5" width="2" height="2"/><rect x="1" y="9" width="2" height="2"/><rect x="5" y="9" width="2" height="2"/><rect x="9" y="9" width="2" height="2"/></g></svg>
</div>
</body></html>
